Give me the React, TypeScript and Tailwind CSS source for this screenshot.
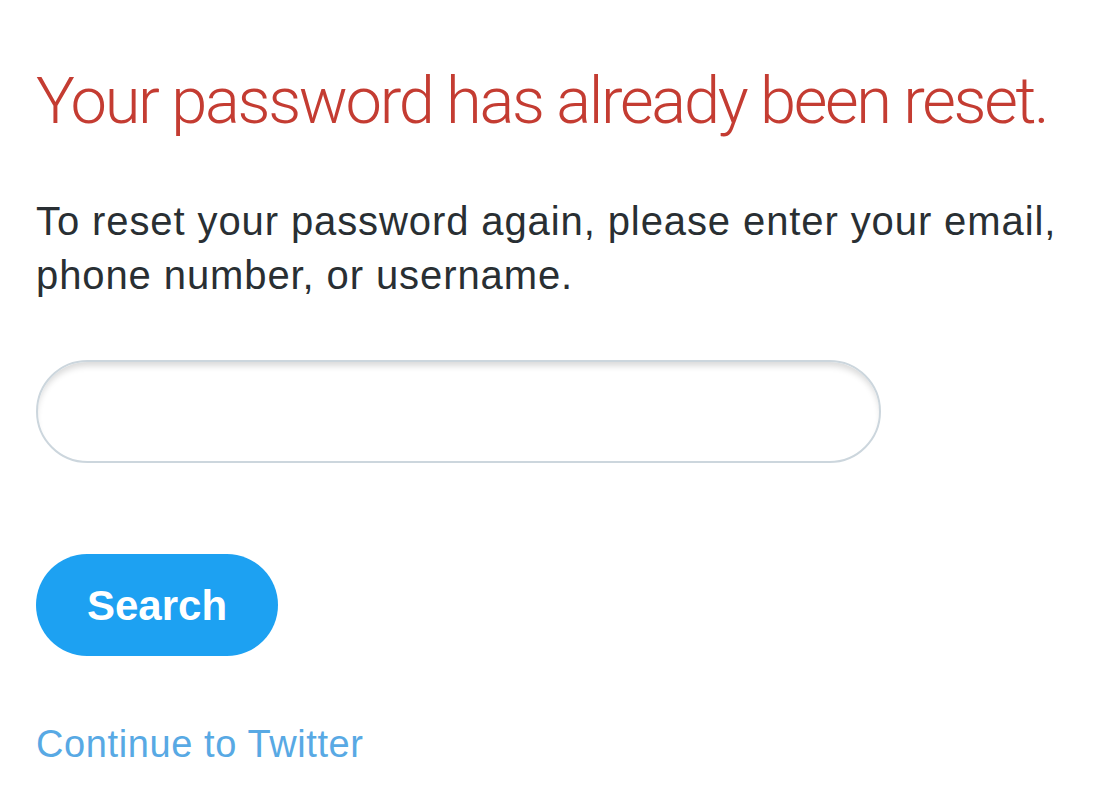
export default function App() {
  return (
    <div className="min-h-[811px] w-[1119px] bg-white px-9 pt-[62px]" style={{ fontFamily: '"Liberation Sans", Arial, sans-serif' }}>
      <h1
        className="whitespace-nowrap text-[65px] leading-[78px] tracking-[-2.3px] text-[#c43c32]"
        style={{ fontFamily: 'Roboto, "Liberation Sans", sans-serif', fontWeight: 300 }}
      >
        Your password has already been reset.
      </h1>
      <p className="mt-[54px] text-[40px] leading-[54px] tracking-[0.9px] text-[#292f33]">
        To reset your password again, please enter your email,
        <br />
        phone number, or username.
      </p>
      <div className="mt-[58px]">
        <input
          type="text"
          className="h-[103px] w-[845px] rounded-full border-2 border-[#ccd6dd] bg-white px-8 text-[40px] shadow-[inset_0_6px_6px_-2px_rgba(0,0,0,0.15)] outline-none"
        />
      </div>
      <button className="mt-[91px] flex h-[102px] w-[242px] items-center justify-center rounded-full bg-[#1da1f2] text-[42px] font-bold text-white">
        Search
      </button>
      <a href="#" className="mt-[65px] block text-[38px] leading-[46px] tracking-[0.6px] text-[#58a9e4]">
        Continue to Twitter
      </a>
    </div>
  );
}
